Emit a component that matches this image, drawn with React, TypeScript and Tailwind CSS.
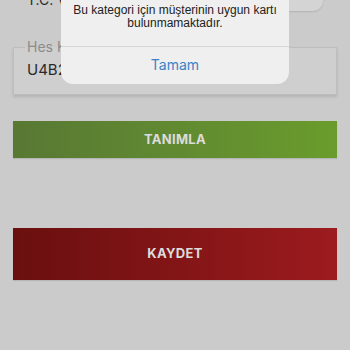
export default function App() {
  return (
    <div className="relative h-[350px] w-[350px] overflow-hidden bg-[#cbcbcb] font-['Inter',sans-serif]">
      <div className="flex flex-col px-[13px] pt-0">
        <div className="-mt-[21px] flex items-end justify-between pl-[14px] pr-[14px]">
          <span className="pb-[2px] text-[14px] leading-[18px] text-[#2a2a2a]">T.C. Vergi No</span>
          <div className="h-[32px] w-[70px] rounded-[10px] bg-[#d4d4d4] shadow-[0_1px_2px_rgba(0,0,0,0.12)]" />
        </div>
        <fieldset className="mt-[29px] h-[55px] border border-[#bdbdbd] bg-[#cfcfcf] px-[13px] shadow-[0_2px_3px_rgba(0,0,0,0.12)]">
          <legend className="-ml-[2px] px-[2px] text-[14px] leading-[14px] text-[#8c8c8c]">Hes Kodu</legend>
          <div className="pt-[7px] text-[15px] leading-[18px] text-[#2a2a2a]">U4B2K37F21</div>
        </fieldset>
        <div className="mt-[26px] flex flex-col gap-[70px]">
          <button className="flex h-[37px] w-full items-center justify-center bg-gradient-to-r from-[#587833] to-[#6a9c2c] text-[13px] font-bold tracking-[0.3px] text-[#dcdcdc] shadow-[0_1px_1px_rgba(0,0,0,0.1)]">
            TANIMLA
          </button>
          <button className="flex h-[52px] w-full items-center justify-center bg-gradient-to-r from-[#6a0f0f] to-[#9c1b1e] text-[13px] font-bold tracking-[0.3px] text-[#dcdcdc] shadow-[0_1px_1px_rgba(0,0,0,0.1)]">
            KAYDET
          </button>
        </div>
      </div>
      <div className="absolute left-[61px] top-[-20px] flex w-[228px] flex-col overflow-hidden rounded-[12px] bg-[#efefef]">
        <div className="flex flex-col items-center px-[6px] pb-[17px] pt-[24px] text-center font-['Liberation_Sans',sans-serif] text-[12px] leading-[12.5px] text-[#222]">
          <span className="whitespace-nowrap">Bu kategori için müşterinin uygun kartı</span>
          <span>bulunmamaktadır.</span>
        </div>
        <div className="h-px bg-[#d6d6d6]" />
        <div className="flex h-[37px] items-center justify-center pb-[3px] text-[14px] text-[#3b83c5]">Tamam</div>
      </div>
    </div>
  );
}
